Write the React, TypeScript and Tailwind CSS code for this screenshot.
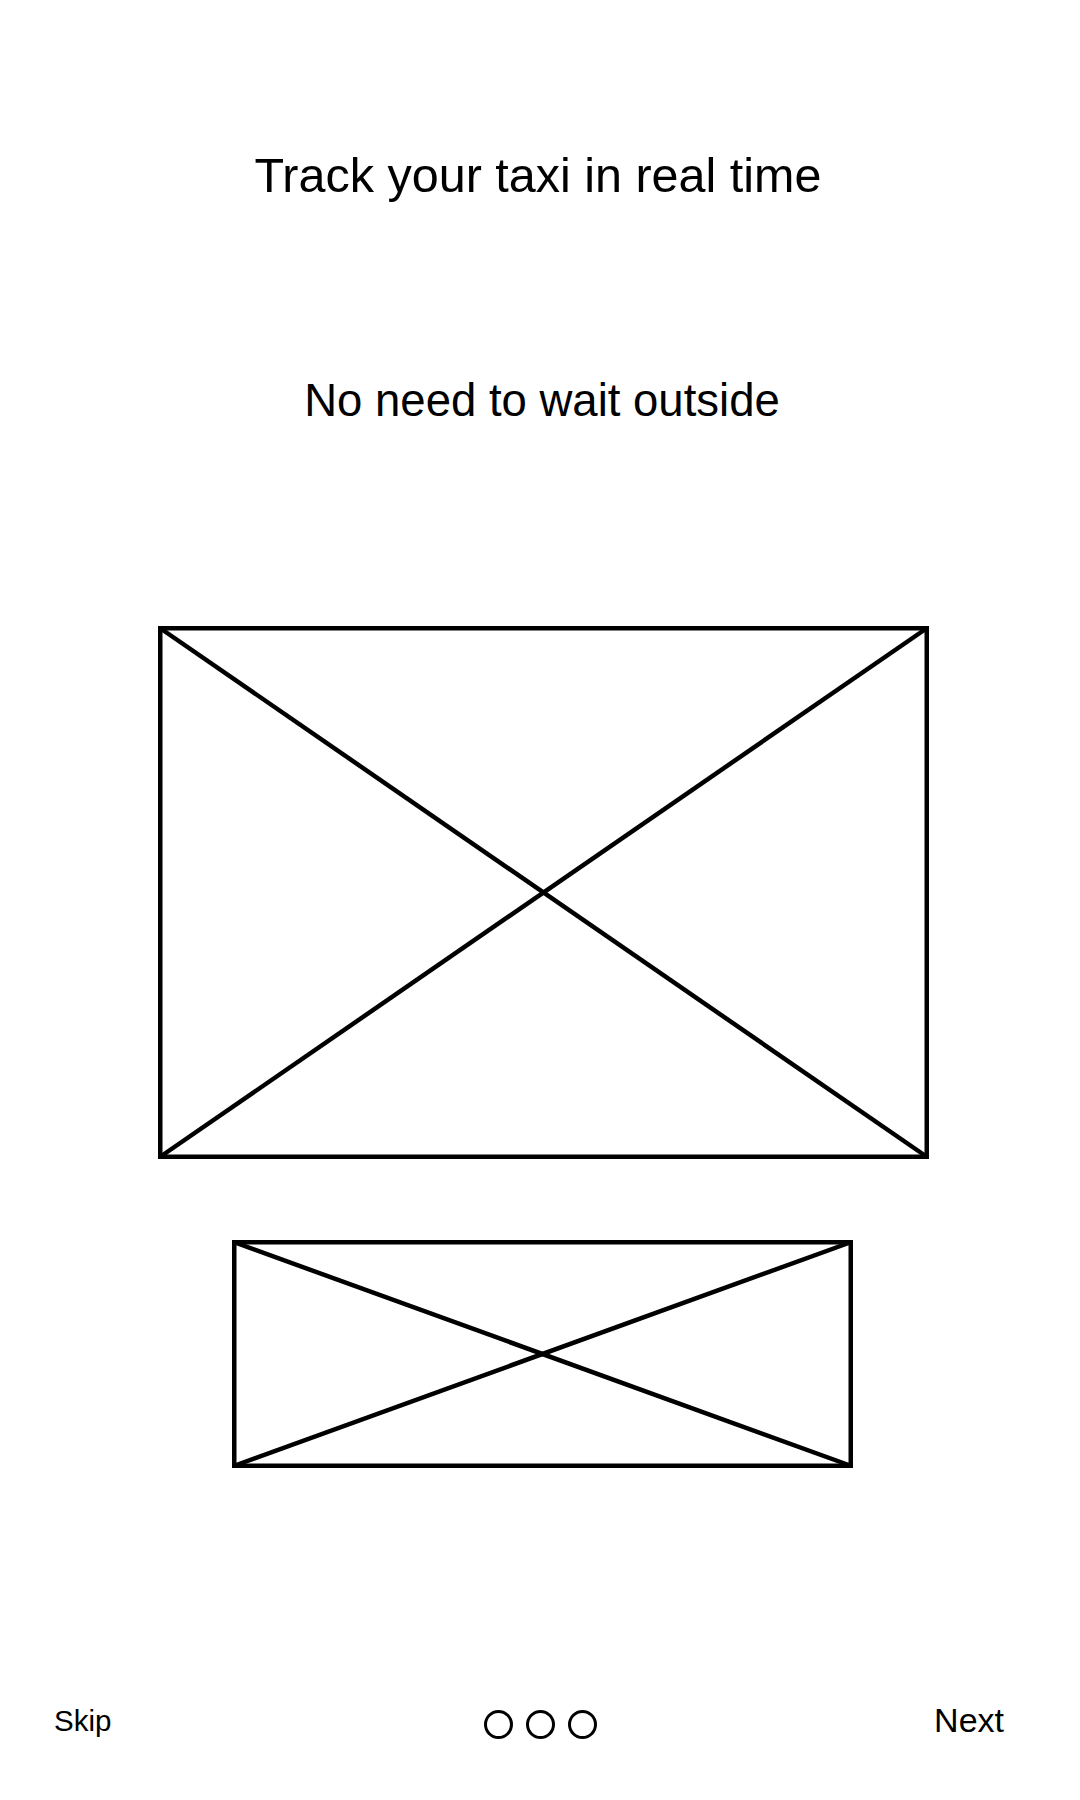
const Placeholder = ({ w, h }: { w: number; h: number }) => {
  const s = 4.5;
  const o = s / 2;
  return (
    <svg width={w} height={h} viewBox={`0 0 ${w} ${h}`} className="block">
      <rect x={o} y={o} width={w - s} height={h - s} fill="none" stroke="#000" strokeWidth={s} />
      <line x1={o} y1={o} x2={w - o} y2={h - o} stroke="#000" strokeWidth={s} />
      <line x1={w - o} y1={o} x2={o} y2={h - o} stroke="#000" strokeWidth={s} />
    </svg>
  );
};

const Dot = () => (
  <span className="block w-[29px] h-[29px] rounded-full border-[3px] border-black" />
);

export default function App() {
  return (
    <div
      className="w-[1080px] h-[1800px] bg-white text-black flex flex-col"
      style={{ fontFamily: '"Liberation Sans", Arial, sans-serif' }}
    >
      <h1 className="mt-[151px] pr-[4px] text-center text-[48.5px] leading-none font-normal">
        Track your taxi in real time
      </h1>

      <p className="mt-[178px] pl-[4px] text-center text-[45.5px] leading-none">
        No need to wait outside
      </p>

      <div className="mt-[203px] pl-[158px]">
        <Placeholder w={771} h={533} />
      </div>

      <div className="mt-[81px] pl-[232px]">
        <Placeholder w={621} h={228} />
      </div>

      <div className="mt-[235px] grid grid-cols-[1fr_auto_1fr] items-start">
        <div className="pl-[54px] pt-[3px]">
          <span className="text-[29.5px] leading-none">Skip</span>
        </div>
        <div className="flex gap-[13px] mt-[7px]">
          <Dot />
          <Dot />
          <Dot />
        </div>
        <div className="flex justify-end pr-[76px]">
          <span className="text-[34px] leading-none">Next</span>
        </div>
      </div>
    </div>
  );
}
